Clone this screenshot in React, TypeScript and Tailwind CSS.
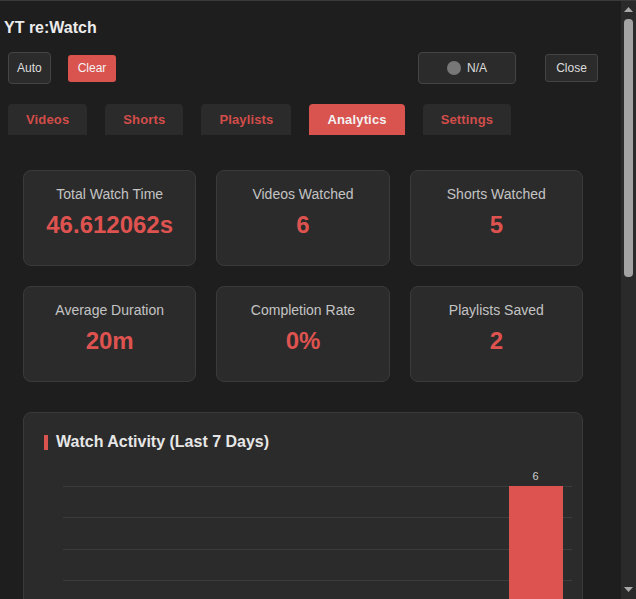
import React from "react";

const stats = [
  { label: "Total Watch Time", value: "46.612062s" },
  { label: "Videos Watched", value: "6" },
  { label: "Shorts Watched", value: "5" },
  { label: "Average Duration", value: "20m" },
  { label: "Completion Rate", value: "0%" },
  { label: "Playlists Saved", value: "2" },
];

const days = [
  { day: "Mon", count: 0 },
  { day: "Tue", count: 0 },
  { day: "Wed", count: 0 },
  { day: "Thu", count: 0 },
  { day: "Fri", count: 0 },
  { day: "Sat", count: 0 },
  { day: "Sun", count: 6 },
];

const tabs = ["Videos", "Shorts", "Playlists", "Analytics", "Settings"];

function StatCard({ label, value }: { label: string; value: string }) {
  return (
    <div className="h-[96px] rounded-lg border border-[#3a3a3a] bg-[#2b2b2b] pt-[14px] text-center">
      <div className="text-[14px] leading-[18px] text-[#c4c4c4]">{label}</div>
      <div className="mt-[8px] text-[24px] font-bold leading-[28px] text-[#de5350]">{value}</div>
    </div>
  );
}

function ActivityChart() {
  const max = Math.max(...days.map((d) => d.count), 1);
  const chartH = 158;
  return (
    <div className="relative ml-[19px] mt-[35px] w-[509px]">
      <div className="absolute inset-x-0 top-0 flex h-[158px] flex-col justify-between">
        {[0, 1, 2, 3, 4, 5].map((i) => (
          <div key={i} className="h-px bg-[#3c3c3c]" />
        ))}
      </div>
      <div className="relative flex h-[158px] items-end">
        {days.map((d) => (
          <div key={d.day} className="flex flex-1 justify-center">
            <div
              className="relative w-[54px] bg-[#dc534f]"
              style={{ height: (d.count / max) * chartH }}
            >
              {d.count > 0 && (
                <span className="absolute inset-x-0 -top-[16px] text-center text-[11px] leading-[13px] text-[#cccccc]">
                  {d.count}
                </span>
              )}
            </div>
          </div>
        ))}
      </div>
    </div>
  );
}

function FakeScrollbar() {
  return (
    <div className="flex w-[15px] shrink-0 flex-col items-center bg-[#2a2a2a]">
      <svg width="9" height="6" viewBox="0 0 9 6" className="mt-[6px]">
        <path d="M4.5 0 L9 5 L0 5 Z" fill="#a8a8a8" />
      </svg>
      <div className="mt-[6px] h-[258px] w-[9px] rounded-[4px] bg-[#a3a3a3]" />
      <div className="flex-1" />
      <svg width="9" height="6" viewBox="0 0 9 6" className="mb-[6px]">
        <path d="M0 0 L9 0 L4.5 5 Z" fill="#a8a8a8" />
      </svg>
    </div>
  );
}

export default function App() {
  return (
    <div
      className="flex h-[599px] w-[636px] overflow-hidden border-t border-[#3a3a3a] bg-[#1e1e1e] text-[#e6e6e6]"
      style={{ fontFamily: '"Liberation Sans", Arial, sans-serif' }}
    >
      <div className="min-w-0 flex-1 overflow-hidden">
        <div className="px-2 pt-[18px]">
          <h1 className="-ml-1 text-[16px] font-bold leading-[18px] text-[#ececec]">YT re:Watch</h1>

          <div className="mt-[15px] flex h-[32px] items-center">
            <button className="h-[32px] rounded border border-[#444] bg-[#2b2b2b] px-[8px] text-[12px] text-[#ddd]">
              Auto
            </button>
            <button className="ml-[17px] h-[27px] rounded-[3px] bg-[#d9534f] px-[10px] text-[12px] text-[#f4f4f4]">
              Clear
            </button>
            <button className="ml-auto flex h-[32px] w-[98px] items-center justify-center gap-[6px] rounded border border-[#444] bg-[#2b2b2b] text-[12px] text-[#ddd]">
              <span className="h-[14px] w-[14px] rounded-full bg-[#777]" />
              N/A
            </button>
            <button className="ml-[29px] mr-[15px] h-[28px] w-[53px] rounded-[3px] border border-[#444] bg-[#2b2b2b] text-[12px] text-[#ddd]">
              Close
            </button>
          </div>

          <div className="mt-[20px] flex gap-[18px]">
            {tabs.map((t) => (
              <button
                key={t}
                className={`h-[31px] rounded-t px-[18px] text-[13px] font-bold tracking-[0.15px] ${
                  t === "Analytics" ? "bg-[#d9534f] text-[#f2f2f2]" : "bg-[#2b2b2b] text-[#d24d4a]"
                }`}
              >
                {t}
              </button>
            ))}
          </div>

          <div className="pl-[15px] pr-[30px] pt-[35px]">
            <div className="grid grid-cols-3 gap-[20px]">
              {stats.map((s) => (
                <StatCard key={s.label} label={s.label} value={s.value} />
              ))}
            </div>

            <div className="mt-[30px] rounded-lg border border-[#3a3a3a] bg-[#2b2b2b] px-5 pb-5 pt-5">
              <div className="flex items-center gap-2">
                <span className="h-[15px] w-[4px] bg-[#d9534f]" />
                <h2 className="text-[16px] font-bold leading-[18px] text-[#e6e6e6]">Watch Activity (Last 7 Days)</h2>
              </div>
              <ActivityChart />
            </div>
          </div>
        </div>
      </div>
      <FakeScrollbar />
    </div>
  );
}
